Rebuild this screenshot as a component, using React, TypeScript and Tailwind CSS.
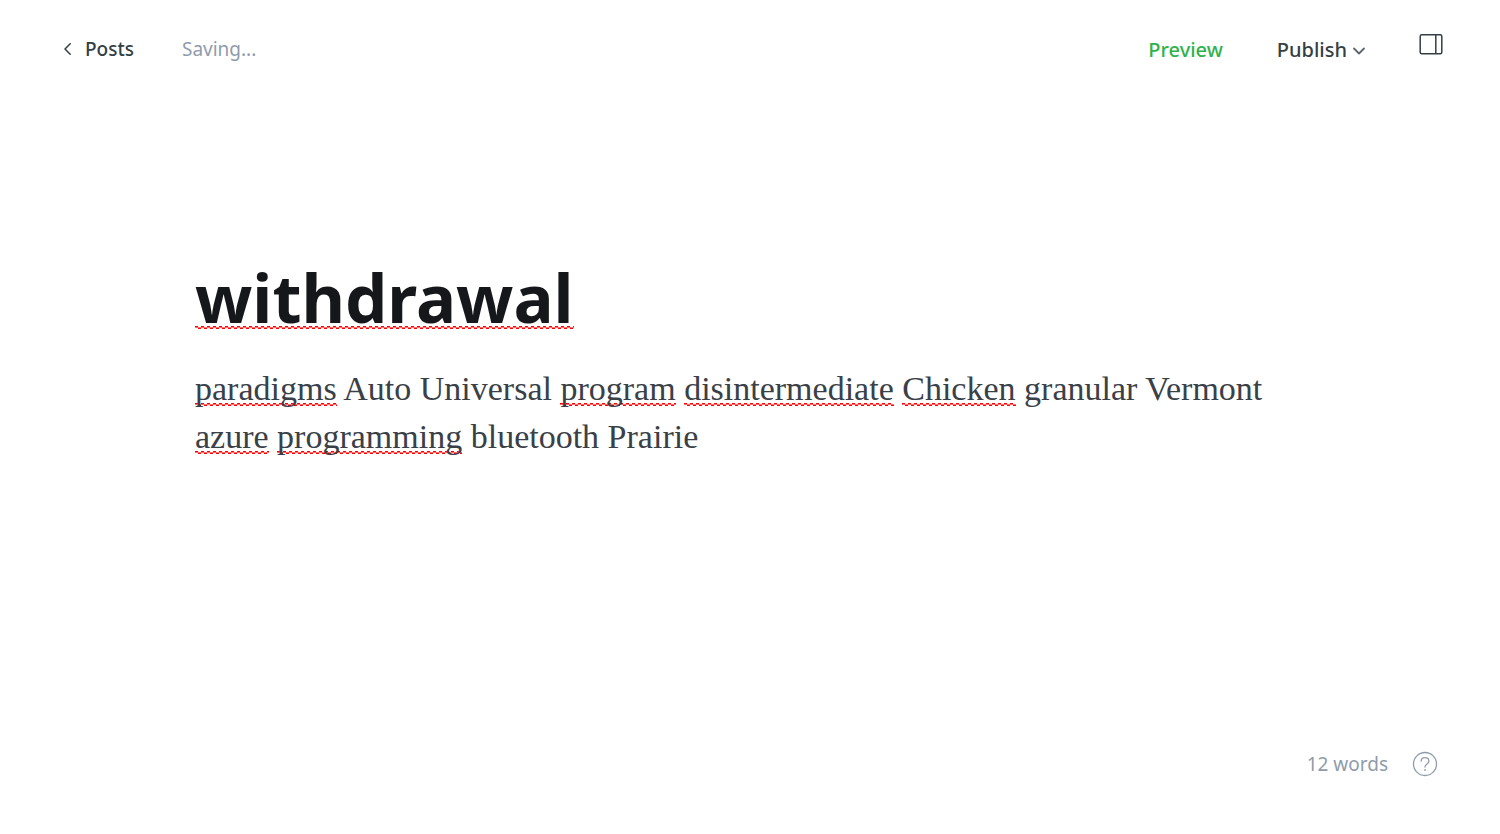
import type { ReactNode } from "react";

// Three one-pixel rows: crests, slopes and troughs of the spelling underline.
const squiggle =
  "bg-[linear-gradient(90deg,#f00_50%,transparent_50%),linear-gradient(90deg,#ff6a6a,#ff6a6a),linear-gradient(90deg,#f00_50%,transparent_50%)] bg-[length:6px_1px] bg-repeat-x";

function Misspelled({ title = false, children }: { title?: boolean; children: ReactNode }) {
  const place = title
    ? "bg-[position:0_calc(100%-16px),0_calc(100%-15px),3px_calc(100%-14px)]"
    : "bg-[position:0_calc(100%-3px),0_calc(100%-2px),3px_calc(100%-1px)]";
  return <span className={`${squiggle} ${place}`}>{children}</span>;
}

export default function App() {
  return (
    <div className="flex min-h-screen flex-col bg-white font-['Noto_Sans','Segoe_UI',sans-serif] text-[19px] leading-6 text-[#343f44]">
      <header className="flex h-[98px] items-center justify-between pr-[57px] pl-16">
        <nav className="flex items-center gap-12">
          <a href="#posts" className="flex items-center gap-[13px] font-medium">
            <svg className="h-3 w-2" viewBox="0 0 8 12" fill="none" stroke="currentColor" strokeWidth="1.5" strokeLinecap="round" strokeLinejoin="round" aria-hidden="true">
              <path d="M6.2 .8 1 6l5.200 5.200" />
            </svg>
            Posts
          </a>
          <span className="text-[#8e9cac]" role="status">Saving...</span>
        </nav>
        <div className="mt-0.5 flex items-center gap-[54px] text-xl leading-6">
          <button type="button" className="font-medium text-[#30b24a]">Preview</button>
          <button type="button" className="flex items-center gap-1.5 font-medium">
            Publish
            <svg className="mt-0.5 h-2 w-3" viewBox="0 0 12 8" fill="none" stroke="#5d666f" strokeWidth="1.8" strokeLinecap="round" strokeLinejoin="round" aria-hidden="true">
              <path d="M1 1.500 6 6.500l5-5" />
            </svg>
          </button>
          <button type="button" aria-label="Settings" className="pb-3">
            <svg className="h-6 w-6" viewBox="0 0 24 24" fill="none" stroke="currentColor" strokeWidth="1.500" aria-hidden="true">
              <rect x="1.200" y="2.700" width="21.600" height="19" rx="1.500" />
              <path d="M16.800 2.700v19" />
            </svg>
          </button>
        </div>
      </header>
      <main className="mx-auto w-full max-w-[1110px] flex-1 pt-[157px]">
        <h1
          contentEditable
          suppressContentEditableWarning
          spellCheck={false}
          role="textbox"
          aria-label="Post title"
          className="text-[67px] leading-[84px] font-bold text-[#15171a] outline-none"
        >
          <Misspelled title>withdrawal</Misspelled>
        </h1>
        <div
          contentEditable
          suppressContentEditableWarning
          spellCheck={false}
          role="textbox"
          aria-multiline="true"
          aria-label="Post body"
          className="mt-[26px] font-['Liberation_Serif',serif] text-[34px] leading-12 text-[#3a4047] outline-none"
        >
          <p>
            <Misspelled>paradigms</Misspelled> Auto Universal <Misspelled>program</Misspelled>{" "}
            <Misspelled>disintermediate</Misspelled> <Misspelled>Chicken</Misspelled> granular Vermont{" "}
            <Misspelled>azure</Misspelled> <Misspelled>programming</Misspelled> bluetooth Prairie
          </p>
        </div>
      </main>
      <footer className="flex items-center justify-end gap-6 pr-[62px] pb-[57px] text-[#8e9cac]">
        <span>12 words</span>
        <a href="#help" aria-label="Help">
          <svg className="h-[26px] w-[26px]" viewBox="0 0 26 26" fill="none" stroke="currentColor" strokeWidth="1.300" strokeLinecap="round" aria-hidden="true">
            <circle cx="13" cy="13" r="11.500" />
            <path d="M9.200 10.200C9.200 8 10.900 6.700 13 6.700s3.900 1.300 3.900 3.400c0 2.900-3.900 2.900-3.900 5.900" />
            <circle cx="13" cy="19" r=".9" fill="currentColor" stroke="none" />
          </svg>
        </a>
      </footer>
    </div>
  );
}
